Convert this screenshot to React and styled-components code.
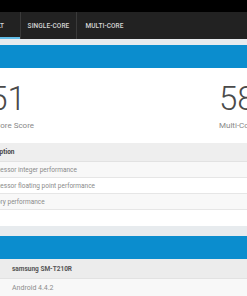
import React from "react";
import styled, { createGlobalStyle } from "styled-components";

const GlobalStyle = createGlobalStyle`
  html, body {
    margin: 0;
    padding: 0;
    background: #ffffff;
    overflow: hidden;
  }
  body {
    width: 247px;
    height: 296px;
    font-family: Roboto, "Liberation Sans", sans-serif;
  }
  * { box-sizing: border-box; }
`;

const Page = styled.div`
  width: 247px;
  height: 296px;
  overflow: hidden;
  display: flex;
  flex-direction: column;
`;

const TopStrip = styled.div`
  height: 12px;
  flex-shrink: 0;
  background: #000;
`;

const TabBar = styled.nav`
  height: 27px;
  flex-shrink: 0;
  display: flex;
  background: #222222;
  margin-left: -35px;
`;

const Tab = styled.div`
  width: 56px;
  flex-shrink: 0;
  display: flex;
  align-items: center;
  justify-content: center;
  border-right: 1px solid ${(p) => (p.$last ? "transparent" : "#3a3a3a")};
  box-shadow: ${(p) => (p.$active ? "inset 0 -2px 0 #62bde8" : "none")};
  font-size: 6.5px;
  font-weight: 500;
  color: #d6d6d6;
  letter-spacing: 0.1px;
  white-space: nowrap;
`;

const Band = styled.div`
  height: ${(p) => p.$h}px;
  flex-shrink: 0;
  background: #e7ebee;
`;

const BlueBar = styled.div`
  height: 23px;
  flex-shrink: 0;
  background: #0b8dce;
`;

const Scores = styled.section`
  height: 75px;
  flex-shrink: 0;
  display: flex;
  justify-content: flex-start;
  margin-left: -29px;
  padding-top: 14px;
`;

const ScoreBlock = styled.div`
  display: flex;
  flex-direction: column;
  width: ${(p) => p.$w}px;
  flex-shrink: 0;
`;

const ScoreValue = styled.div`
  font-size: 33px;
  font-weight: 300;
  line-height: 33px;
  color: #4a4a4a;
  white-space: nowrap;
`;

const ScoreLabel = styled.div`
  margin-top: 6px;
  font-size: 8px;
  line-height: 10px;
  color: #888;
  white-space: nowrap;
`;

const Table = styled.div`
  display: flex;
  flex-direction: column;
  flex-shrink: 0;
`;

const HeadRow = styled.div`
  height: 19px;
  display: flex;
  align-items: center;
  background: #eeeeee;
  border-bottom: 1px solid #e2e2e2;
  font-size: 6.5px;
  font-weight: 700;
  color: #444;
  white-space: nowrap;
  padding-left: ${(p) => p.$pad || 0}px;
`;

const Row = styled.div`
  height: 16px;
  display: flex;
  align-items: center;
  background: ${(p) => (p.$alt ? "#f8f8f8" : "#ffffff")};
  border-bottom: 1px solid #e6e6e6;
  font-size: 6.5px;
  color: #8a8a8a;
  white-space: nowrap;
  padding-left: ${(p) => p.$pad || 0}px;
`;

const Indent = styled.span`
  margin-left: ${(p) => p.$x}px;
`;

const Spacer = styled.div`
  height: 16px;
  flex-shrink: 0;
`;

const SysHead = styled(HeadRow)`
  height: 20px;
  background: #ececec;
  color: #555;
`;

const SysRow = styled(Row)`
  height: 18px;
  font-size: 7px;
  color: #8c8c8c;
`;

export default function App() {
  return (
    <>
      <GlobalStyle />
      <Page>
        <TopStrip />
        <TabBar>
          <Tab $active>RESULT</Tab>
          <Tab>SINGLE-CORE</Tab>
          <Tab $last>MULTI-CORE</Tab>
        </TabBar>
        <Band $h={6} />
        <BlueBar />
        <Scores>
          <ScoreBlock $w={248}>
            <ScoreValue>351</ScoreValue>
            <ScoreLabel>Single-Core Score</ScoreLabel>
          </ScoreBlock>
          <ScoreBlock $w={80}>
            <ScoreValue>584</ScoreValue>
            <ScoreLabel>Multi-Core Score</ScoreLabel>
          </ScoreBlock>
        </Scores>
        <Table>
          <HeadRow>
            <Indent $x={-19}>Description</Indent>
          </HeadRow>
          <Row $alt>
            <Indent $x={-13}>Processor integer performance</Indent>
          </Row>
          <Row>
            <Indent $x={-13}>Processor floating point performance</Indent>
          </Row>
          <Row $alt>
            <Indent $x={-18}>Memory performance</Indent>
          </Row>
        </Table>
        <Spacer />
        <Band $h={10} />
        <BlueBar />
        <Table>
          <SysHead $pad={12}>samsung SM-T210R</SysHead>
          <SysRow $alt $pad={12}>
            Android 4.4.2
          </SysRow>
        </Table>
      </Page>
    </>
  );
}
